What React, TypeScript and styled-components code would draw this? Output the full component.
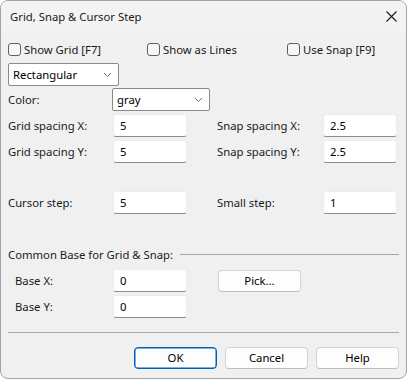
import React from 'react'
import styled, { createGlobalStyle } from 'styled-components'

const GlobalStyle = createGlobalStyle`
  html, body {
    margin: 0;
    padding: 0;
    background: #ffffff;
  }
  body {
    font-family: "Segoe UI", "Noto Sans", "Open Sans", sans-serif;
    font-size: 11.3px;
    color: #1a1a1a;
  }
`

const Window = styled.div`
  box-sizing: border-box;
  width: 407px;
  height: 379px;
  border: 1px solid #a3a3a3;
  border-radius: 8px;
  background: #f0f0f0;
  overflow: hidden;
  display: flex;
  flex-direction: column;
`

const TitleBar = styled.div`
  height: 30px;
  display: flex;
  align-items: center;
  justify-content: space-between;
  padding: 0 9px 0 9px;
  background: #f3f3f3;
  flex-shrink: 0;
`

const Title = styled.span`
  color: #1a1a1a;
`

const Body = styled.div`
  display: flex;
  flex-direction: column;
  padding: 0 7px;
`

const CheckRow = styled.div`
  display: grid;
  grid-template-columns: 139px 140px auto;
  margin-top: 10px;
  height: 16px;
  align-items: center;
`

const CheckLabel = styled.label`
  display: flex;
  align-items: center;
  gap: 3px;
  white-space: nowrap;
`

const Box = styled.span`
  box-sizing: border-box;
  width: 13px;
  height: 13px;
  border: 1px solid #5f5f5f;
  border-radius: 3px;
  background: #f7f7f7;
`

const ModeRow = styled.div`
  display: flex;
  margin-top: 6px;
`

const Combo = styled.div<{ $w: number }>`
  box-sizing: border-box;
  width: ${p => p.$w}px;
  height: 23px;
  display: flex;
  align-items: center;
  justify-content: space-between;
  padding: 0 6px 0 4px;
  background: #ffffff;
  border: 1px solid #8a8a8a;
  border-radius: 2px;
  color: #000;
`

const Chevron = () => (
  <svg width="9" height="6" viewBox="0 0 9 6">
    <path d="M1 1 L4.5 4.5 L8 1" fill="none" stroke="#707070" strokeWidth="1" />
  </svg>
)

const ColorRow = styled.div`
  display: grid;
  grid-template-columns: 104px auto;
  align-items: center;
  margin-top: 2px;
`

const FieldGrid = styled.div<{ $top: number }>`
  display: grid;
  grid-template-columns: 105px 74px 30px 106px 74px;
  grid-auto-rows: 23px;
  row-gap: 3px;
  align-items: center;
  margin-top: ${p => p.$top}px;
`

const Label = styled.span<{ $indent?: number }>`
  padding-left: ${p => p.$indent ?? 0}px;
  white-space: nowrap;
`

const Input = styled.div`
  box-sizing: border-box;
  height: 23px;
  display: flex;
  align-items: center;
  padding: 0 6px 1px;
  background: #ffffff;
  border: 1px solid #ececec;
  border-bottom: 1px solid #8c8c8c;
  border-radius: 3px;
  color: #000;
`

const Section = styled.div`
  display: flex;
  align-items: center;
  gap: 7px;
  height: 16px;
  margin-top: 32px;
`

const Rule = styled.div`
  flex: 1;
  height: 1px;
  background: #a7a7a7;
`

const Separator = styled.div`
  height: 1px;
  background: #a7a7a7;
  margin-top: 14px;
`

const Button = styled.button<{ $primary?: boolean; $shift?: number }>`
  box-sizing: border-box;
  width: 83px;
  height: 22px;
  margin-left: ${p => p.$shift ?? 0}px;
  padding: 0 0 1px;
  font: inherit;
  color: #000;
  background: #fdfdfd;
  border: 1px solid ${p => (p.$primary ? '#005fb8' : '#d3d3d3')};
  border-bottom-color: ${p => (p.$primary ? '#005fb8' : '#bdbdbd')};
  border-radius: 4px;
  box-shadow: ${p => (p.$primary ? 'inset 0 0 0 0.5px #005fb8' : 'none')};
`

const ButtonRow = styled.div`
  display: flex;
  justify-content: flex-end;
  gap: 8px;
  margin-top: 14px;
`

const CloseIcon = () => (
  <svg width="11" height="11" viewBox="0 0 11 11">
    <path d="M0.5 0.5 L10.5 10.5 M10.5 0.5 L0.5 10.5" stroke="#1a1a1a" strokeWidth="1.1" />
  </svg>
)

const Check: React.FC<{ label: string }> = ({ label }) => (
  <CheckLabel>
    <Box />
    {label}
  </CheckLabel>
)

const App: React.FC = () => {
  return (
    <>
      <GlobalStyle />
      <Window>
        <TitleBar>
          <Title>Grid, Snap &amp; Cursor Step</Title>
          <CloseIcon />
        </TitleBar>
        <Body>
          <CheckRow>
            <Check label='Show Grid [F7]' />
            <Check label='Show as Lines' />
            <Check label='Use Snap [F9]' />
          </CheckRow>
          <ModeRow>
            <Combo $w={111}>Rectangular<Chevron /></Combo>
          </ModeRow>
          <ColorRow>
            <Label>Color:</Label>
            <Combo $w={98}>gray<Chevron /></Combo>
          </ColorRow>
          <FieldGrid $top={3}>
            <Label>Grid spacing X:</Label>
            <Input>5</Input>
            <span />
            <Label>Snap spacing X:</Label>
            <Input>2.5</Input>
            <Label>Grid spacing Y:</Label>
            <Input>5</Input>
            <span />
            <Label>Snap spacing Y:</Label>
            <Input>2.5</Input>
          </FieldGrid>
          <FieldGrid $top={28}>
            <Label>Cursor step:</Label>
            <Input>5</Input>
            <span />
            <Label>Small step:</Label>
            <Input>1</Input>
          </FieldGrid>
          <Section>
            Common Base for Grid &amp; Snap:
            <Rule />
          </Section>
          <FieldGrid $top={7}>
            <Label $indent={7}>Base X:</Label>
            <Input>0</Input>
            <span />
            <Button $shift={1}>Pick...</Button>
            <span />
            <Label $indent={7}>Base Y:</Label>
            <Input>0</Input>
          </FieldGrid>
          <Separator />
          <ButtonRow>
            <Button $primary>OK</Button>
            <Button>Cancel</Button>
            <Button>Help</Button>
          </ButtonRow>
        </Body>
      </Window>
    </>
  )
}

export default App
